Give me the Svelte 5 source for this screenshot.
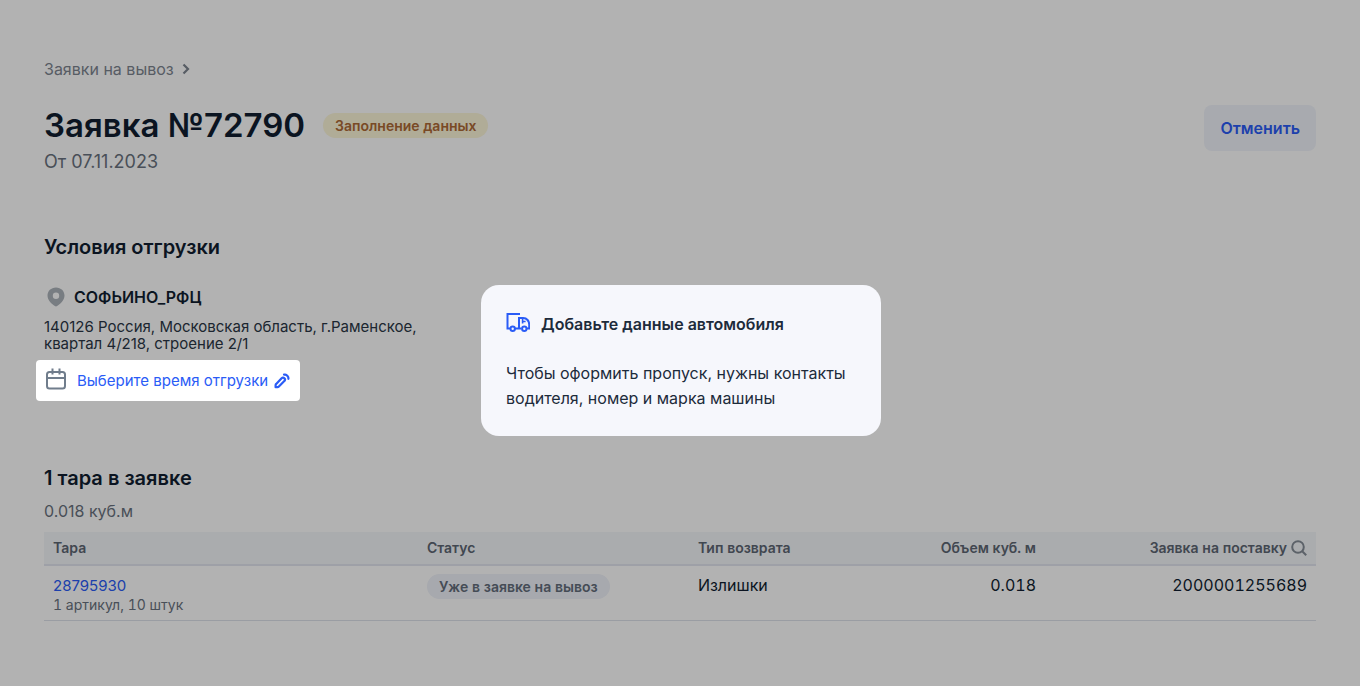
<script>
  const request = { number: '72790', date: '07.11.2023', status: 'Заполнение данных' };
  const rows = [
    {
      id: '28795930',
      details: '1 артикул, 10 штук',
      status: 'Уже в заявке на вывоз',
      type: 'Излишки',
      volume: '0.018',
      supply: '2000001255689'
    }
  ];
</script>

<main class="page">
  <nav class="crumbs" aria-label="Навигация">
    <a href="#requests">Заявки на вывоз</a>
    <svg width="8" height="12" viewBox="0 0 8 12" aria-hidden="true">
      <path d="M1.5 1.5 6 6l-4.500 4.500" fill="none" stroke="currentColor" stroke-width="2.200" />
    </svg>
  </nav>

  <header class="head">
    <div>
      <div class="title-row">
        <h1>Заявка №{request.number}</h1>
        <span class="badge warn">{request.status}</span>
      </div>
      <p class="date">От {request.date}</p>
    </div>
    <button class="cancel" type="button">Отменить</button>
  </header>

  <section class="terms">
    <h2>Условия отгрузки</h2>
    <h3>
      <svg width="18" height="20" viewBox="0 0 18 20" aria-hidden="true">
        <path
          fill="currentColor"
          fill-rule="evenodd"
          d="M9 .5C4 .5.500 4.100.500 8.600c0 5.200 4.500 8.400 7.400 10.500.700.500 1.500.500 2.200 0 2.900-2.100 7.400-5.300 7.400-10.500C17.500 4.100 14 .5 9 .5Zm0 5a3.200 3.200 0 1 1 0 6.400 3.200 3.200 0 0 1 0-6.400Z"
        />
      </svg>
      СОФЬИНО_РФЦ
    </h3>
    <address>140126 Россия, Московская область, г.Раменское, квартал 4/218, строение 2/1</address>
    <button class="pick-time" type="button">
      <svg class="calendar" width="20" height="22" viewBox="0 0 20 22" aria-hidden="true">
        <g fill="none" stroke="currentColor" stroke-width="2">
          <rect x="1" y="4" width="18" height="16.500" rx="2.500" />
          <path d="M1 10h18M6.500.500v6M13.500.500v6" />
        </g>
      </svg>
      <span>Выберите время отгрузки</span>
      <svg class="pencil" width="16" height="16" viewBox="0 0 16 16" aria-hidden="true">
        <g fill="none" stroke="currentColor" stroke-width="2.200" stroke-linejoin="round" stroke-linecap="round">
          <path d="M7.600 5.200a1.900 1.900 0 0 1 2.700 2.900L4.900 13.600q-.6.6-1.400.6H1.600v-1.900q0-.8.6-1.400Z" />
          <path d="M10 1.600h1q1 0 1.700.7l1 1q.7.7.7 1.700v.8" />
        </g>
      </svg>
    </button>
  </section>

  <section class="boxes">
    <h2>1 тара в заявке</h2>
    <p class="volume">0.018 куб.м</p>
    <table>
      <colgroup>
        <col class="c-box" />
        <col class="c-status" />
        <col class="c-type" />
        <col class="c-volume" />
        <col class="c-supply" />
      </colgroup>
      <thead>
        <tr>
          <th scope="col">Тара</th>
          <th scope="col">Статус</th>
          <th scope="col">Тип возврата</th>
          <th scope="col" class="num">Объем куб. м</th>
          <th scope="col" class="num">
            <span class="searchable">
              Заявка на поставку
              <button class="search" type="button" aria-label="Поиск">
                <svg width="16" height="16" viewBox="0 0 16 16" aria-hidden="true">
                  <g fill="none" stroke="currentColor" stroke-width="2">
                    <circle cx="7" cy="7" r="5.800" />
                    <path d="m11.200 11.200 4 4" />
                  </g>
                </svg>
              </button>
            </span>
          </th>
        </tr>
      </thead>
      <tbody>
        {#each rows as row (row.id)}
          <tr>
            <td>
              <a class="box-link" href="#{row.id}">{row.id}</a>
              <div class="details">{row.details}</div>
            </td>
            <td><span class="badge neutral">{row.status}</span></td>
            <td>{row.type}</td>
            <td class="num">{row.volume}</td>
            <td class="num">{row.supply}</td>
          </tr>
        {/each}
      </tbody>
    </table>
  </section>
</main>

<div class="overlay">
  <div class="hint" role="dialog" aria-labelledby="hint-title">
    <h3 id="hint-title">
      <svg width="24" height="20" viewBox="0 0 24 20" aria-hidden="true">
        <g fill="none" stroke="currentColor" stroke-width="2">
          <path d="M14 2H1.500v14.500h3M9 16.500h6.500M21 16.500h2.200v-4c0-3.300-2.300-6.500-6-6.500H13v10.500" />
          <path d="M16.600 6v5.500M16.600 9.500h3" stroke-width="1.600" />
          <circle cx="6.700" cy="16.700" r="2.200" />
          <circle cx="18.300" cy="16.700" r="2.200" />
        </g>
      </svg>
      Добавьте данные автомобиля
    </h3>
    <p>Чтобы оформить пропуск, нужны контакты водителя, номер и марка машины</p>
  </div>
</div>

<style>
  :global(body) {
    margin: 0;
    background: #fff;
  }

  .page,
  .overlay {
    font-family: Inter, 'Noto Sans', sans-serif;
    font-size: 16px;
    color: #101e30;
    box-sizing: border-box;
  }

  .page {
    min-height: 100vh;
    padding: 59px 44px 40px;
  }

  h1,
  h2,
  h3,
  p {
    margin: 0;
  }

  a {
    text-decoration: none;
  }

  button {
    font: inherit;
    border: 0;
    cursor: pointer;
  }

  svg {
    flex: none;
  }

  .crumbs {
    display: flex;
    align-items: center;
    gap: 8px;
    line-height: 20px;
    color: #7d8590;
  }

  .crumbs a {
    color: inherit;
  }

  .head {
    display: flex;
    justify-content: space-between;
    align-items: flex-start;
    padding-top: 24px;
  }

  .title-row {
    display: flex;
    align-items: center;
    gap: 18px;
  }

  h1 {
    font-size: 33px;
    line-height: 44px;
    font-weight: 600;
  }

  .date {
    padding-top: 3px;
    font-size: 18px;
    line-height: 24px;
    color: #69727e;
  }

  .badge {
    display: inline-block;
    padding: 0 12px;
    border-radius: 13px;
    font-size: 14px;
    line-height: 25px;
    font-weight: 600;
  }

  .warn {
    background: #fdf6d9;
    color: #ae6a36;
  }

  .neutral {
    background: #eff2f9;
    color: #646e7c;
  }

  .cancel {
    margin-top: 2px;
    padding: 11px 16px;
    border-radius: 8px;
    background: #f1f4fb;
    color: #2a5cf6;
    line-height: 24px;
    font-weight: 600;
  }

  h2 {
    font-size: 20px;
    line-height: 24px;
    font-weight: 600;
  }

  .terms {
    padding-top: 61px;
  }

  .terms h3 {
    display: flex;
    align-items: center;
    gap: 9px;
    padding: 28px 0 11px 3px;
    font-size: 16px;
    line-height: 20px;
    font-weight: 600;
  }

  .terms h3 svg {
    color: #adb3ba;
  }

  address {
    max-width: 380px;
    font-size: 15px;
    line-height: 17px;
    font-style: normal;
    color: #2a3645;
  }

  .pick-time {
    position: relative;
    z-index: 2;
    display: flex;
    align-items: center;
    margin: 8px 0 0 -8px;
    padding: 8px 10px;
    border-radius: 4px;
    background: #fff;
    color: #2a5cf6;
    font-size: 15px;
    line-height: 25px;
  }

  .calendar {
    align-self: flex-start;
    margin-right: 11px;
    color: #707d8c;
  }

  .pencil {
    margin-left: 6px;
  }

  .boxes {
    padding-top: 65px;
  }

  .volume {
    padding: 11px 0;
    line-height: 20px;
    color: #69727e;
  }

  table {
    width: 100%;
    table-layout: fixed;
    border-collapse: collapse;
    font-variant-numeric: tabular-nums;
  }

  .c-box {
    width: 29.4%;
  }

  .c-status,
  .c-supply {
    width: 21.3%;
  }

  .c-type,
  .c-volume {
    width: 14%;
  }

  th {
    padding: 6px 9px;
    background: #f4f7fa;
    border-bottom: 2px solid #e2e6ef;
    color: #5d6673;
    font-size: 14px;
    line-height: 20px;
    font-weight: 600;
    text-align: left;
  }

  td {
    padding: 8px 9px 7px;
    border-bottom: 1px solid #dde1ea;
    line-height: 22px;
    vertical-align: top;
  }

  .num {
    text-align: right;
  }

  .searchable {
    display: inline-flex;
    align-items: center;
    gap: 4px;
    white-space: nowrap;
  }

  .search {
    display: flex;
    padding: 0;
    background: none;
    color: #858d97;
  }

  .box-link {
    color: #2a5cf6;
    font-size: 15px;
    font-variant-numeric: normal;
  }

  .details {
    font-size: 14px;
    line-height: 16px;
    color: #69727e;
  }

  .overlay {
    position: fixed;
    inset: 0;
    z-index: 1;
    display: grid;
    place-items: center;
    padding: 34px 20px 0 22px;
    background: rgba(0, 0, 0, 0.3);
  }

  .hint {
    box-sizing: border-box;
    width: 100%;
    max-width: 400px;
    padding: 27px 25px 25px;
    border-radius: 18px;
    background: #f6f7fc;
    color: #1d2b3b;
  }

  .hint h3 {
    display: flex;
    align-items: flex-start;
    gap: 11px;
    font-size: 16px;
    line-height: 24px;
    font-weight: 600;
  }

  .hint h3 svg {
    color: #2a5cf6;
  }

  .hint p {
    padding-top: 25px;
    line-height: 25px;
  }
</style>
